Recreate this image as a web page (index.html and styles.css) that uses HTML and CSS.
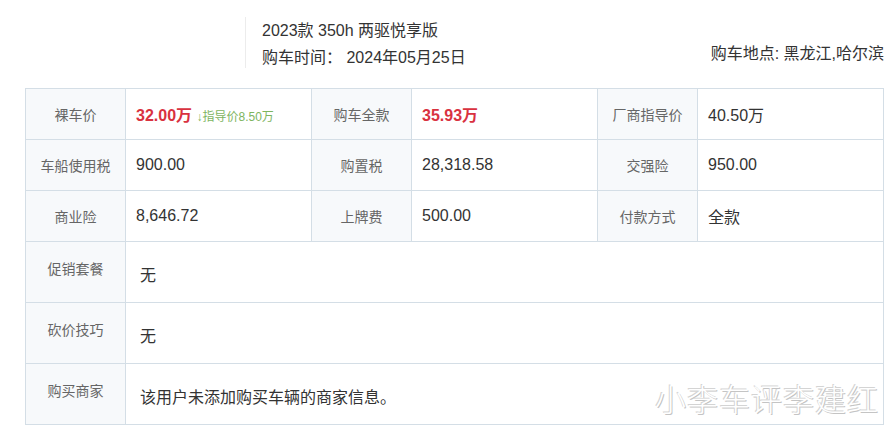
FILE: index.html
```html
<!DOCTYPE html>
<html lang="zh-CN">
<head>
<meta charset="utf-8">
<link rel="stylesheet" href="styles.css">
</head>
<body>
<div class="page">
  <div class="head">
    <div class="model">
      <div class="line">2023款 350h 两驱悦享版</div>
      <div class="line">购车时间： 2024年05月25日</div>
    </div>
    <div class="place">购车地点: 黑龙江,哈尔滨</div>
  </div>
  <div class="wrap">
    <table class="info">
      <colgroup>
        <col class="c-l"><col class="c-v"><col class="c-l"><col class="c-v"><col class="c-l"><col class="c-v">
      </colgroup>
      <tr class="r-s">
        <th>裸车价</th>
        <td><span class="red">32.00万</span> <span class="down">↓指导价8.50万</span></td>
        <th>购车全款</th>
        <td><span class="red">35.93万</span></td>
        <th>厂商指导价</th>
        <td>40.50万</td>
      </tr>
      <tr class="r-s">
        <th>车船使用税</th>
        <td>900.00</td>
        <th>购置税</th>
        <td>28,318.58</td>
        <th>交强险</th>
        <td>950.00</td>
      </tr>
      <tr class="r-s">
        <th>商业险</th>
        <td>8,646.72</td>
        <th>上牌费</th>
        <td>500.00</td>
        <th>付款方式</th>
        <td>全款</td>
      </tr>
      <tr class="r-t">
        <th>促销套餐</th>
        <td colspan="5">无</td>
      </tr>
      <tr class="r-t">
        <th>砍价技巧</th>
        <td colspan="5">无</td>
      </tr>
      <tr class="r-t">
        <th>购买商家</th>
        <td colspan="5">该用户未添加购买车辆的商家信息。</td>
      </tr>
    </table>
    <div class="mark">小李车评李建红</div>
  </div>
</div>
</body>
</html>
```

FILE: styles.css
```css
html, body {
  margin: 0;
  padding: 0;
  background: #fff;
}
body {
  font-family: "Liberation Sans", "Noto Sans CJK SC", sans-serif;
  color: #333;
}
.page {
  width: 884px;
  position: relative;
}
.head {
  display: flex;
  height: 88px;
  padding-left: 245px;
  box-sizing: border-box;
}
.model {
  margin-top: 17px;
  height: 51px;
  border-left: 1px solid #ececec;
  padding-left: 16px;
  font-size: 16px;
  line-height: 27px;
  color: #333;
}
.place {
  margin-left: auto;
  margin-top: 43px;
  font-size: 16px;
  line-height: 22px;
  height: 22px;
  color: #333;
}
.wrap {
  position: relative;
  margin-left: 25px;
  width: 859px;
}
.info {
  border-collapse: collapse;
  width: 859px;
  table-layout: fixed;
}
.c-l { width: 100px; }
.c-v { width: 186px; }
.info th, .info td {
  border: 1px solid #d4dee6;
  padding: 0;
  box-sizing: border-box;
}
.info th {
  background: #f7f9fb;
  color: #666;
  font-weight: normal;
  font-size: 14px;
  text-align: center;
}
.info td {
  font-size: 16px;
  color: #333;
  padding-left: 10px;
  text-align: left;
}
.r-s th, .r-s td {
  height: 51px;
  vertical-align: middle;
}
.r-t th, .r-t td {
  height: 61px;
}
.r-t th {
  vertical-align: top;
  padding-top: 17px;
  line-height: 20px;
}
.r-t td {
  vertical-align: middle;
  padding-left: 14px;
  padding-top: 3px;
}
.red {
  color: #d9323f;
  font-weight: bold;
}
.down {
  color: #7db55f;
  font-size: 12px;
}
.mark {
  position: absolute;
  right: 5px;
  bottom: 7px;
  font-size: 31px;
  line-height: 34px;
  letter-spacing: 1px;
  color: #fff;
  text-shadow: -1px -1px 0 #d4d4d4, 1px 1px 0 #c4c4c4;
  font-weight: 300;
}
```
